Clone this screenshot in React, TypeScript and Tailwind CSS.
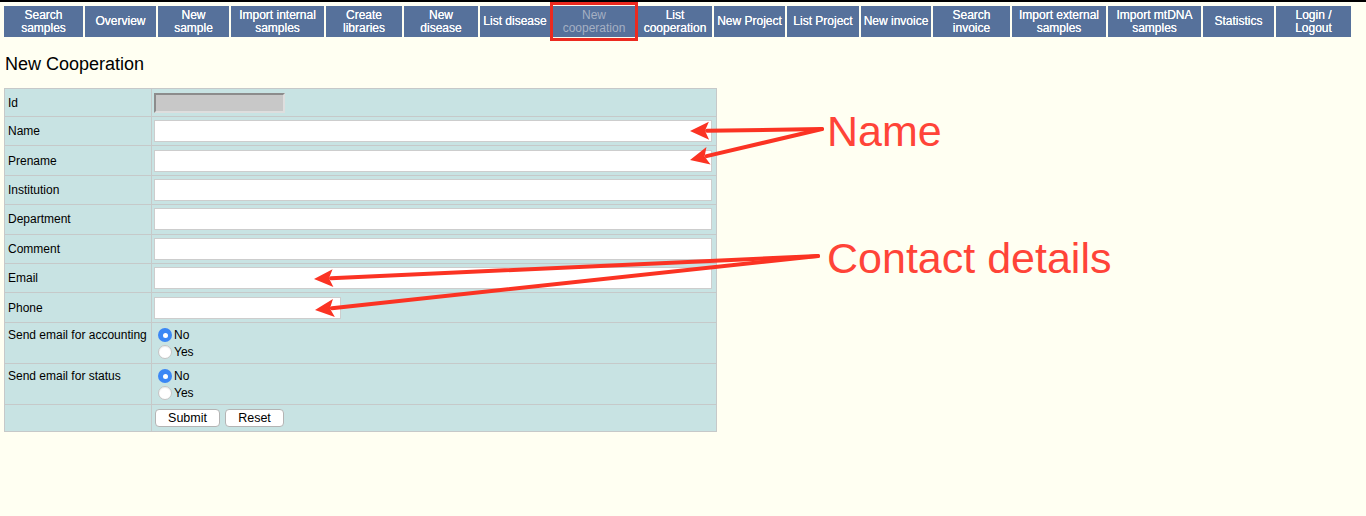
import React from "react";

type NavItem = { lines: string[]; w: number; active?: boolean };

const navItems: NavItem[] = [
  { lines: ["Search", "samples"], w: 79 },
  { lines: ["Overview"], w: 71 },
  { lines: ["New", "sample"], w: 71 },
  { lines: ["Import internal", "samples"], w: 93 },
  { lines: ["Create", "libraries"], w: 76 },
  { lines: ["New", "disease"], w: 74 },
  { lines: ["List disease"], w: 70 },
  { lines: ["New", "cooperation"], w: 84, active: true },
  { lines: ["List", "cooperation"], w: 74 },
  { lines: ["New Project"], w: 71 },
  { lines: ["List Project"], w: 72 },
  { lines: ["New invoice"], w: 70 },
  { lines: ["Search", "invoice"], w: 77 },
  { lines: ["Import external", "samples"], w: 94 },
  { lines: ["Import mtDNA", "samples"], w: 93 },
  { lines: ["Statistics"], w: 71 },
  { lines: ["Login /", "Logout"], w: 75 },
];

const textRows = [
  { label: "Name", w: 558 },
  { label: "Prename", w: 558 },
  { label: "Institution", w: 558 },
  { label: "Department", w: 558 },
  { label: "Comment", w: 558 },
  { label: "Email", w: 558 },
  { label: "Phone", w: 187 },
];

// arrow from tail to tip, head drawn as a triangle
const arrows = [
  { from: [822, 129], to: [690, 131] },
  { from: [822, 129], to: [690, 160] },
  { from: [818, 256], to: [314, 279] },
  { from: [818, 256], to: [315, 310] },
];

const Arrow = ({ from, to }: { from: number[]; to: number[] }) => {
  const dx = to[0] - from[0];
  const dy = to[1] - from[1];
  const len = Math.hypot(dx, dy);
  const ux = dx / len;
  const uy = dy / len;
  const bx = to[0] - ux * 19;
  const by = to[1] - uy * 19;
  const px = -uy * 9;
  const py = ux * 9;
  return (
    <g>
      <line
        x1={from[0]}
        y1={from[1]}
        x2={bx + ux * 2}
        y2={by + uy * 2}
        stroke="#fb3323"
        strokeWidth={4}
        strokeLinecap="round"
      />
      <polygon
        points={`${to[0]},${to[1]} ${bx + px},${by + py} ${bx + ux * 4},${by + uy * 4} ${bx - px},${by - py}`}
        fill="#fb3323"
      />
    </g>
  );
};

const Radio = ({ checked, label }: { checked?: boolean; label: string }) => (
  <div className="flex items-center h-[17px]">
    {checked ? (
      <span className="w-[14px] h-[14px] rounded-full bg-[#3b87f5] flex items-center justify-center ml-[4px]">
        <span className="w-[5px] h-[5px] rounded-full bg-white" />
      </span>
    ) : (
      <span className="w-[14px] h-[14px] rounded-full bg-white border border-[#c4c4c4] shadow-[inset_0_1px_1px_rgba(0,0,0,0.08)] ml-[4px]" />
    )}
    <span className="ml-[2px]">{label}</span>
  </div>
);

const cell = "border border-[#c6c9c9]";
const labelCell = `${cell} px-[3px] whitespace-nowrap`;

const App = () => {
  return (
    <div
      className="relative min-h-screen bg-[#fffff2] border-t-2 border-black text-black"
      style={{ fontFamily: '"Liberation Sans", Arial, sans-serif' }}
    >
      {/* Navigation */}
      <nav className="flex gap-[2px] pl-[4px] pt-[4px]">
        {navItems.map((item) => (
          <div
            key={item.lines.join(" ")}
            className={`relative h-[31px] bg-[#56719b] flex flex-col items-center justify-center text-[12px] leading-[13px] text-center ${
              item.active ? "text-[#a5b0c3]" : "text-white [text-shadow:0_0_0.4px_#fff]"
            }`}
            style={{ width: item.w }}
          >
            {item.lines.map((l) => (
              <span key={l} className="whitespace-nowrap">
                {l}
              </span>
            ))}
            {item.active && (
              <span className="absolute -left-[2px] -right-[2px] -top-[4px] -bottom-[4px] border-[3px] border-[#ec2a1f]" />
            )}
          </div>
        ))}
      </nav>

      <h1 className="mt-[15px] ml-[5px] text-[18px] leading-[24px]">
        New Cooperation
      </h1>

      {/* Form */}
      <table className="mt-[12px] ml-[4px] w-[712px] table-fixed border-collapse bg-[#c8e3e3] text-[12px]">
        <colgroup>
          <col className="w-[147px]" />
          <col className="w-[565px]" />
        </colgroup>
        <tbody>
          <tr className="h-[28px]">
            <td className={labelCell}>Id</td>
            <td className={`${cell} pl-[2px] pr-[3px]`}>
              <div className="w-[131px] h-[20px] bg-[#c8c8c8] border-2 border-t-[#8c8c8c] border-l-[#8c8c8c] border-b-[#dedede] border-r-[#dedede]" />
            </td>
          </tr>
          {textRows.map((r) => (
            <tr key={r.label} className="h-[29.4px]">
              <td className={labelCell}>{r.label}</td>
              <td className={`${cell} pl-[2px] pr-[3px]`}>
                <input
                  type="text"
                  className="block h-[22px] bg-white border border-[#cdcdcd] outline-none"
                  style={{ width: r.w }}
                />
              </td>
            </tr>
          ))}
          <tr className="h-[41px]">
            <td className={`${labelCell} align-top pt-[3px]`}>
              Send email for accounting
            </td>
            <td className={`${cell} pl-[2px] pr-[3px] align-top pt-[4px]`}>
              <Radio checked label="No" />
              <Radio label="Yes" />
            </td>
          </tr>
          <tr className="h-[41px]">
            <td className={`${labelCell} align-top pt-[3px]`}>
              Send email for status
            </td>
            <td className={`${cell} pl-[2px] pr-[3px] align-top pt-[4px]`}>
              <Radio checked label="No" />
              <Radio label="Yes" />
            </td>
          </tr>
          <tr className="h-[27px]">
            <td className={cell} />
            <td className={`${cell} pl-[3px]`}>
              <div className="flex gap-[5px]">
                <button className="w-[65px] h-[18px] bg-white border border-[#b4b4b4] rounded-[4px] text-[12.5px] leading-[16px]">
                  Submit
                </button>
                <button className="w-[59px] h-[18px] bg-white border border-[#b4b4b4] rounded-[4px] text-[12.5px] leading-[16px]">
                  Reset
                </button>
              </div>
            </td>
          </tr>
        </tbody>
      </table>

      {/* Annotations */}
      <svg
        className="absolute left-0 top-[-2px] pointer-events-none"
        width={1366}
        height={516}
      >
        {arrows.map((a, i) => (
          <Arrow key={i} from={a.from} to={a.to} />
        ))}
      </svg>
      <span className="absolute left-[827px] top-[104px] text-[43px] leading-[50px] text-[#ff4438]">
        Name
      </span>
      <span className="absolute left-[827px] top-[231px] text-[43px] leading-[50px] text-[#ff4438]">
        Contact details
      </span>
    </div>
  );
};

export default App;
